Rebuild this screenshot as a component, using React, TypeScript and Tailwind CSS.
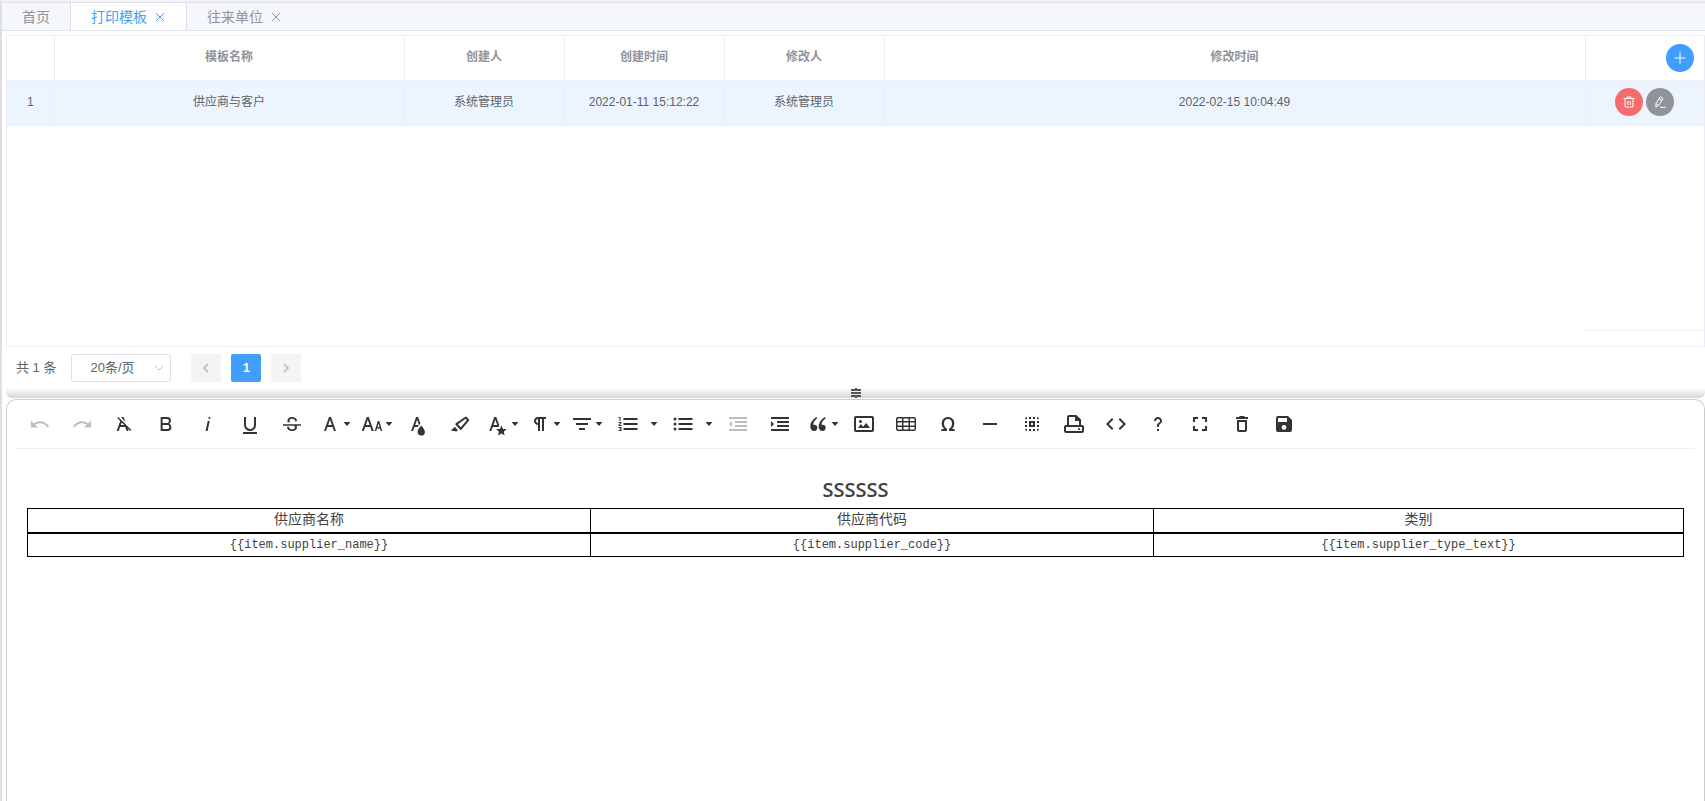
import { useState } from 'react'

const tabs = [
  { name: '首页', closable: false },
  { name: '打印模板', closable: true },
  { name: '往来单位', closable: true },
]

const rows = [
  { name: '供应商与客户', creator: '系统管理员', createdAt: '2022-01-11 15:12:22', editor: '系统管理员', editedAt: '2022-02-15 10:04:49' },
]

type Tool = { title: string; path: string; kind?: 'dropdown' | 'split'; disabled?: boolean }

const tools: Tool[] = [
  { title: '撤销', disabled: true, path: 'M10.4,9.4c-1.7,0.3-3.2,0.9-4.6,2L3,8.5v7h7L7.3,12.8c3.7-2.6,8.8-1.8,11.5,1.9c0.2,0.2,0.4,0.5,0.5,0.8l1.8-0.9C18.9,10.8,14.7,8.7,10.4,9.4z' },
  { title: '重做', disabled: true, path: 'M13.6,9.4c1.7,0.3,3.2,0.9,4.6,2L21,8.5v7h-7l2.7-2.7C13,10.1,7.9,11,5.3,14.7c-0.2,0.3-0.4,0.5-0.5,0.8L3,14.6C5.1,10.8,9.3,8.7,13.6,9.4z' },
  { title: '清除格式', path: 'M11.48,10.09l-1.2-1.21L8.8,7.41,6.43,5,5.37,6.1,8.25,9,4.66,19h2l1.43-4h5.14l1.43,4h2l-.89-2.51L18.27,19l1.07-1.06L14.59,13.2ZM8.8,13l.92-2.56L12.27,13Zm.56-7.15L9.66,5h2l1.75,4.9Z' },
  { title: '粗体', path: 'M15.25,11.8h0A3.68,3.68,0,0,0,17,9a3.93,3.93,0,0,0-3.86-4H6.65V19h7a3.74,3.74,0,0,0,3.7-3.78V15.1A3.64,3.64,0,0,0,15.25,11.8ZM8.65,7h4.2a2.09,2.09,0,0,1,2,1.3,2.09,2.09,0,0,1-1.37,2.61,2.23,2.23,0,0,1-.63.09H8.65Zm4.6,10H8.65V13h4.6a2.09,2.09,0,0,1,2,1.3,2.09,2.09,0,0,1-1.37,2.61A2.23,2.23,0,0,1,13.25,17Z' },
  { title: '斜体', path: 'M11.76,9h2l-2.2,10h-2Zm1.68-4a1,1,0,1,0,1,1,1,1,0,0,0-1-1Z' },
  { title: '下划线', path: 'M19,20v2H5V20Zm-3-6.785a4,4,0,0,1-5.74,3.4A3.75,3.75,0,0,1,8,13.085V5.005H6v8.21a6,6,0,0,0,8,5.44,5.851,5.851,0,0,0,4-5.65v-8H16ZM16,5v0h2V5ZM8,5H6v0H8Z' },
  { title: '删除线', path: 'M3,12.2H21v1.5H16.63a3.6,3.6,0,0,1,.35,1.59,3.25,3.25,0,0,1-1.31,2.7A5.55,5.55,0,0,1,12.2,19a6.44,6.44,0,0,1-2.62-.54,4.46,4.46,0,0,1-1.89-1.49,3.67,3.67,0,0,1-.67-2.15V14.7H9.02v.11a2.18,2.18,0,0,0,.85,1.83,3.69,3.69,0,0,0,2.33.68,3.39,3.39,0,0,0,2.08-.55,1.73,1.73,0,0,0,.7-1.46,1.7,1.7,0,0,0-.65-1.43,3,3,0,0,0-.27-.18H3ZM16.34,7.06A4.18,4.18,0,0,0,14.62,5.55,5.63,5.63,0,0,0,12.11,5,5.16,5.16,0,0,0,8.75,6.06,3.36,3.36,0,0,0,7.44,8.77a3.23,3.23,0,0,0,.32,1.43h2.6c-.08-.05-.19-.11-.25-.16a1.61,1.61,0,0,1-.65-1.3,1.8,1.8,0,0,1,.69-1.51,3.13,3.13,0,0,1,1.97-.55,3.05,3.05,0,0,1,2.1.67,2.35,2.35,0,0,1,.74,1.83v.11h2V9.17A3.9,3.9,0,0,0,16.34,7.06Z' },
  { title: '字体', kind: 'dropdown', path: 'M16,19h2L13,5H11L6,19H8l1.43-4h5.14Zm-5.86-6L12,7.8,13.86,13Z' },
  { title: '字号', kind: 'dropdown', path: 'M20.75,19h1.5l-3-10h-1.5l-3,10h1.5L17,16.5h3Zm-3.3-4,1.05-3.5L19.55,15Zm-5.7,4h2l-5-14h-2l-5,14h2l1.43-4h5.14ZM5.89,13,7.75,7.8,9.61,13Z' },
  { title: '文字颜色', path: 'M15.2,13.494s-3.6,3.9-3.6,6.3a3.65,3.65,0,0,0,7.3.1v-.1C18.9,17.394,15.2,13.494,15.2,13.494Zm-1.47-1.357.669-.724L12.1,5h-2l-5,14h2l1.43-4h2.943A24.426,24.426,0,0,1,13.726,12.137ZM11.1,7.8l1.86,5.2H9.244Z' },
  { title: '背景颜色', path: 'M9.918,12.241l7.748-5.39,1.179,1.296-6.094,7.207L9.918,12.241M7.587,12.652l4.536,4.983a.934.934,0,0,0,1.395-.091L20.969,8.731A.908.908,0,0,0,20.991,7.533l-2.513-2.761a.908.908,0,0,0-1.195-.091L7.809,11.271A.934.934,0,0,0,7.587,12.652ZM2.794,18.528,8.411,19.5l1.479-1.346-3.029-3.328Z' },
  { title: '内联样式', kind: 'dropdown', path: 'M11.88,15h.7l.7-1.7-3-8.3h-2l-5,14h2l1.4-4Zm-4.4-2,1.9-5.2,1.9,5.2ZM15.4,21.545l3.246,1.949-.909-3.637L20.72,17H16.954l-1.429-3.506L13.837,17H10.071l2.857,2.857-.779,3.637Z' },
  { title: '段落格式', kind: 'dropdown', path: 'M10.15,5A4.11,4.11,0,0,0,6.08,8.18,4,4,0,0,0,10,13v6h2V7h2V19h2V7h2V5ZM8,9a2,2,0,0,1,2-2v4A2,2,0,0,1,8,9Z' },
  { title: '对齐', kind: 'dropdown', path: 'M3,6h18v2H3ZM6,11h12v2H6ZM9,16h6v2H9Z' },
  { title: '有序列表', kind: 'split', path: 'M2.5,16h2v.5h-1v1h1V18h-2v1h3V15h-3Zm1-7h1V5h-2V6h1Zm-1,2H4.3L2.5,13.1V14h3V13H3.7l1.8-2.1V10h-3Zm5-5V8h14V6Zm0,12h14V16H7.5Zm0-5h14V11H7.5Z' },
  { title: '无序列表', kind: 'split', path: 'M4,10.5a1.5,1.5,0,1,0,0,3,1.5,1.5,0,0,0,0-3ZM4,5.5a1.5,1.5,0,1,0,0,3,1.5,1.5,0,0,0,0-3ZM4,15.5a1.5,1.5,0,1,0,0,3,1.5,1.5,0,0,0,0-3ZM7.5,6V8h14V6ZM7.5,18h14V16H7.5ZM7.5,13h14V11H7.5Z' },
  { title: '减少缩进', disabled: true, path: 'M3,12l3,3V9L3,12zM3,19h18v-2H3V19zM3,7h18V5H3V7zM9,11h12V9H9V11zM9,15h12v-2H9V15z' },
  { title: '增加缩进', path: 'M3,9v6l3-3L3,9zM3,19h18v-2H3V19zM3,7h18V5H3V7zM9,11h12V9H9V11zM9,15h12v-2H9V15z' },
  { title: '引用', kind: 'dropdown', path: 'M10.32,5l.94,1.32A12.88,12.88,0,0,0,8.17,9.4a5.54,5.54,0,0,0-1,3.08v.34q.36-.05.66-.08a4.76,4.76,0,0,1,.57-.04,2.87,2.87,0,0,1,2.12.84,2.84,2.84,0,0,1,.84,2.09,3.37,3.37,0,0,1-.89,2.45A3.14,3.14,0,0,1,8.11,19,3.41,3.41,0,0,1,5.38,17.72,4.91,4.91,0,0,1,4.3,14.45,9.37,9.37,0,0,1,5.82,9.33,14.76,14.76,0,0,1,10.32,5Zm8.39,0,.94,1.32a12.88,12.88,0,0,0-3.09,3.08,5.54,5.54,0,0,0-1,3.08v.34q.34-.05.64-.08a4.92,4.92,0,0,1,.59-.04,2.8,2.8,0,0,1,2.1.83,2.9,2.9,0,0,1,.81,2.11,3.42,3.42,0,0,1-.87,2.45A3.06,3.06,0,0,1,16.5,19,3.48,3.48,0,0,1,13.74,17.72,4.85,4.85,0,0,1,12.65,14.45,9.26,9.26,0,0,1,14.17,9.39,15.26,15.26,0,0,1,18.71,5Z' },
  { title: '插入图片', path: 'M14.2,11l3.8,5H6l3-3.9l2.1,2.7L14,11H14.2zM8.5,11c0.8,0,1.5-0.7,1.5-1.5S9.3,8,8.5,8S7,8.7,7,9.5C7,10.3,7.7,11,8.5,11zM22,6v12c0,1.1-0.9,2-2,2H4c-1.1,0-2-0.9-2-2V6c0-1.1,0.9-2,2-2h16C21.1,4,22,4.9,22,6zM20,8.8V6H4v12h16V8.8z' },
  { title: '插入表格', path: 'M20,5H4C2.9,5,2,5.9,2,7v2v1.5v3V15v2c0,1.1,0.9,2,2,2h16c1.1,0,2-0.9,2-2v-2v-1.5v-3V9V7C22,5.9,21.1,5,20,5zM9.5,13.5v-3h5v3H9.5zM14.5,15v2.5h-5V15H14.5zM9.5,9V6.5h5V9H9.5zM3.5,7c0-0.3,0.2-0.5,0.5-0.5h4V9H3.5V7zM3.5,10.5H8v3H3.5V10.5zM3.5,17v-2H8v2.5H4C3.7,17.5,3.5,17.3,3.5,17zM20.5,17c0,0.3-0.2,0.5-0.5,0.5h-4V15h4.5V17zM20.5,13.5H16v-3h4.5V13.5zM16,9V6.5h4c0.3,0,0.5,0.2,0.5,0.5v2H16z' },
  { title: '特殊字符', path: 'M15.77,16.99a8.21,8.21,0,0,0,1.97-2.58,7.35,7.35,0,0,0,.6-3.08A6.09,6.09,0,0,0,12,5a6.13,6.13,0,0,0-4.59,1.79,6.42,6.42,0,0,0-1.76,4.69,6.94,6.94,0,0,0,.62,2.97,8.07,8.07,0,0,0,1.95,2.53H5.41V19h5.54V16.84a5.83,5.83,0,0,1-2.2-2.24A6.41,6.41,0,0,1,7.98,11.45,4.69,4.69,0,0,1,9.08,8.19,3.73,3.73,0,0,1,12,6.97a3.77,3.77,0,0,1,2.91,1.21,4.48,4.48,0,0,1,1.12,3.15,6.71,6.71,0,0,1-.75,3.25,5.84,5.84,0,0,1-2.22,2.26V19h5.54V16.99Z' },
  { title: '分隔线', path: 'M5,11h14v2H5Z' },
  { title: '全选', path: 'M5,7h2V5C5.9,5,5,5.9,5,7zM5,11h2V9H5V11zM9,19h2v-2H9V19zM15,5h-2v2h2V5zM17,5v2h2C19,5.9,18.1,5,17,5zM7,19v-2H5C5,18.1,5.9,19,7,19zM5,15h2v-2H5V15zM11,5H9v2h2V5zM13,19h2v-2h-2V19zM17,11h2V9h-2V11zM17,19c1.1,0,2-0.9,2-2h-2V19zM17,15h2v-2h-2V15zM9,15h6V9H9V15zM11,11h2v2h-2V11z' },
  { title: '打印', path: 'M16.1,17c0-0.6,0.4-1,1-1c0.6,0,1,0.4,1,1s-0.4,1-1,1C16.5,18,16.1,17.6,16.1,17zM22,15v4c0,1.1-0.9,2-2,2H4c-1.1,0-2-0.9-2-2v-4c0-1.1,0.9-2,2-2h1V5c0-1.1,0.9-2,2-2h7.4L19,7.6V13h1C21.1,13,22,13.9,22,15zM7,13h10V9h-4V5H7V13zM20,15H4v4h16V15z' },
  { title: '源代码', path: 'M9.4,16.6,4.8,12,9.4,7.4,8,6,2,12l6,6Zm5.2,0L19.2,12,14.6,7.4,16,6l6,6-6,6Z' },
  { title: '帮助', path: 'M11,17h2v2h-2V17zM12,5C9.8,5,8,6.8,8,9h2c0-1.1,0.9-2,2-2s2,0.9,2,2c0,2-3,1.7-3,5v1h2v-1c0-2.2,3-2.5,3-5C16,6.8,14.2,5,12,5z' },
  { title: '全屏', path: 'M7,14H5v5h5V17H7ZM5,10H7V7h3V5H5Zm12,7H14v2h5V14H17ZM14,5V7h3v3h2V5Z' },
  { title: '清空', path: 'M15,10v8H9v-8H15M14,4H9.9l-1,1H6v2h12V5h-3L14,4zM17,8H7v10c0,1.1,0.9,2,2,2h6c1.1,0,2-0.9,2-2V8z' },
  { title: '保存', path: 'M6,4h10l4,4v10a2,2,0,0,1-2,2H6a2,2,0,0,1-2-2V6a2,2,0,0,1,2-2ZM6,6v4h9V6ZM12,13a2.4,2.4,0,1,0,0,4.8,2.4,2.4,0,0,0,0-4.8Z' },
]

function Caret() {
  return (
    <svg width="8" height="4" viewBox="0 0 8 4" fill="currentColor">
      <path d="M0.5 0h7L4 4z" />
    </svg>
  )
}

function ToolIcon({ path }: { path: string }) {
  return (
    <svg className="shrink-0" width="24" height="24" viewBox="0 0 24 24" fill="currentColor" fillRule="evenodd">
      <path d={path} />
    </svg>
  )
}

function ToolButton({ tool }: { tool: Tool }) {
  if (tool.kind === 'split') {
    return (
      <div className="flex h-10">
        <button title={tool.title} className="flex w-[38px] items-center justify-center">
          <ToolIcon path={tool.path} />
        </button>
        <button title={`${tool.title}选项`} className="flex w-[13px] items-center justify-center">
          <Caret />
        </button>
      </div>
    )
  }
  if (tool.kind === 'dropdown') {
    return (
      <button title={tool.title} className="flex h-10 w-[38px] items-center gap-px pl-[3px]">
        <ToolIcon path={tool.path} />
        <Caret />
      </button>
    )
  }
  return (
    <button
      title={tool.title}
      disabled={tool.disabled}
      className={`flex h-10 w-[38px] items-center justify-center ${tool.disabled ? 'text-[#bdbdbd]' : ''}`}
    >
      <ToolIcon path={tool.path} />
    </button>
  )
}

function Stroke({ d, size, width = 1 }: { d: string; size: number; width?: number }) {
  return (
    <svg width={size} height={size} viewBox="0 0 12 12" fill="none" stroke="currentColor" strokeWidth={width}>
      <path d={d} />
    </svg>
  )
}

function App() {
  const [active, setActive] = useState('打印模板')
  const [pageSize, setPageSize] = useState('20')

  return (
    <div className="flex h-screen flex-col overflow-hidden border-l border-[#dcdfe6] bg-[#f0f2f5] pt-[2px] font-['Liberation_Sans','Noto_Sans_CJK_SC',sans-serif] text-[#606266]">
      <div className="flex min-h-0 flex-1 flex-col border-l border-t border-[#dcdfe6] bg-white">
        <nav className="flex h-7 shrink-0 border-b border-[#dfe4ed] bg-[#f5f7fa] text-sm">
          {tabs.map((tab) => (
            <div
              key={tab.name}
              className={`flex items-center gap-[7px] px-5 ${tab.name === active ? 'border-x border-[#dcdfe6] bg-white text-[#409eff]' : 'text-[#909399]'}`}
            >
              <button onClick={() => setActive(tab.name)}>{tab.name}</button>
              {tab.closable && (
                <button aria-label={`关闭${tab.name}`}>
                  <Stroke d="M2 2l8 8M10 2l-8 8" size={12} />
                </button>
              )}
            </div>
          ))}
        </nav>

        <main className="flex min-h-0 flex-1 flex-col pl-1 pt-1">
          <div className="flex h-[312px] shrink-0 flex-col border border-[#ebeef5]">
            <table className="w-full table-fixed border-collapse text-center text-xs">
              <colgroup>
                <col className="w-[47px]" />
                <col className="w-[350px]" />
                <col className="w-40" />
                <col className="w-40" />
                <col className="w-40" />
                <col />
                <col className="w-[119px]" />
              </colgroup>
              <thead className="text-[#909399]">
                <tr className="h-11 border-b border-[#ebeef5]">
                  {['', '模板名称', '创建人', '创建时间', '修改人', '修改时间'].map((title) => (
                    <th key={title} className="border-r border-[#ebeef5] pb-px font-bold">{title}</th>
                  ))}
                  <th className="pr-[10px]">
                    <button aria-label="新增" className="ml-auto flex size-7 items-center justify-center rounded-full bg-[#409eff] text-white">
                      <Stroke d="M6 0.5v11M0.5 6h11" size={12} />
                    </button>
                  </th>
                </tr>
              </thead>
              <tbody>
                {rows.map((row, index) => (
                  <tr key={row.name} className="h-[45px] border-b border-[#ebeef5] bg-[#ecf5ff] *:pb-px">
                    <td className="border-r border-[#ebeef5]">{index + 1}</td>
                    <td className="border-r border-[#ebeef5]">{row.name}</td>
                    <td className="border-r border-[#ebeef5]">{row.creator}</td>
                    <td className="border-r border-[#ebeef5]">{row.createdAt}</td>
                    <td className="border-r border-[#ebeef5]">{row.editor}</td>
                    <td className="border-r border-[#ebeef5]">{row.editedAt}</td>
                    <td>
                      <div className="flex justify-center gap-[3px]">
                        <button aria-label="删除" className="flex size-7 items-center justify-center rounded-full bg-[#f56c6c] text-white">
                          <Stroke d="M0.5 2.5h11M4 2.5v-1.500h4v1.500M2 2.5v8.500h8v-8.500M4.800 5v4M7.200 5v4" size={12} />
                        </button>
                        <button aria-label="编辑" className="flex size-7 items-center justify-center rounded-full bg-[#909399] text-white">
                          <Stroke d="M6.2 0.8l2.900 1.700-4.300 7-2.900 1.700v-3.500zM5 2.8l2.900 1.700M1.900 7.700l2.900 1.800M6 11.300h5.500" size={12} />
                        </button>
                      </div>
                    </td>
                  </tr>
                ))}
              </tbody>
            </table>
            <div className="mb-[15px] ml-auto w-[119px] flex-1 border-b border-[#ebeef5]" />
          </div>

          <div className="flex h-[41px] shrink-0 items-center pl-[10px] text-[13px]">
            <span>共 1 条</span>
            <div className="relative ml-[15px]">
              <select
                aria-label="每页条数"
                value={pageSize}
                onChange={(e) => setPageSize(e.target.value)}
                className="block h-7 w-[100px] appearance-none rounded-[3px] border border-[#dcdfe6] bg-white pl-[18px] text-[13px]"
              >
                <option value="20">20条/页</option>
                <option value="50">50条/页</option>
              </select>
              <span className="pointer-events-none absolute right-[6px] top-2 text-[#c0c4cc]">
                <Stroke d="M2 4l4 4 4-4" size={12} />
              </span>
            </div>
            <div className="ml-5 flex gap-[10px]">
              <button aria-label="上一页" disabled className="flex h-7 w-[30px] items-center justify-center rounded-[2px] bg-[#f4f4f5] text-[#c0c4cc]">
                <Stroke d="M8 2l-4 4 4 4" size={12} width={2} />
              </button>
              <button className="h-7 w-[30px] rounded-[2px] bg-[#409eff] font-bold text-white">1</button>
              <button aria-label="下一页" disabled className="flex h-7 w-[30px] items-center justify-center rounded-[2px] bg-[#f4f4f5] text-[#c0c4cc]">
                <Stroke d="M4 2l4 4-4 4" size={12} width={2} />
              </button>
            </div>
          </div>

          <div className="mb-px flex h-[10px] shrink-0 cursor-row-resize items-end justify-center rounded-b-md bg-linear-to-b from-white to-[#d5d5d5] text-[#555]">
            <svg width="10" height="10" viewBox="0 0 10 10" fill="currentColor">
              <path d="M0 1h10v2H0zM0 4h10v2H0zM0 7h10v2H0zM4 0h2v1H4zM4 9h2v1H4z" />
            </svg>
          </div>

          <section className="min-h-0 flex-1 rounded-t-[10px] border-x border-t border-[#ccc]">
            <div className="mx-[9px] flex h-[49px] items-center gap-1 border-b border-[#efefef] pl-[5px] text-[#333]">
              {tools.map((tool) => (
                <ToolButton key={tool.title} tool={tool} />
              ))}
            </div>
            <div className="px-5 pt-[27px] text-center text-[#414141]">
              <h2 className="h-8 font-['Open_Sans',sans-serif] text-xl font-semibold leading-7">SSSSSS</h2>
              <table className="w-full table-fixed border-collapse border border-black font-['Liberation_Mono','Noto_Sans_CJK_SC',monospace]">
                <colgroup>
                  <col className="w-[34%]" />
                  <col className="w-[34%]" />
                  <col className="w-[32%]" />
                </colgroup>
                <thead className="text-sm">
                  <tr className="h-6 border-b-2 border-black leading-5">
                    <th className="border-r border-black font-normal">供应商名称</th>
                    <th className="border-r border-black font-normal">供应商代码</th>
                    <th className="font-normal">类别</th>
                  </tr>
                </thead>
                <tbody className="text-xs">
                  <tr className="h-6 leading-5">
                    <td className="border-r border-black">{'{{item.supplier_name}}'}</td>
                    <td className="border-r border-black">{'{{item.supplier_code}}'}</td>
                    <td>{'{{item.supplier_type_text}}'}</td>
                  </tr>
                </tbody>
              </table>
            </div>
          </section>
        </main>
      </div>
    </div>
  )
}

export default App
